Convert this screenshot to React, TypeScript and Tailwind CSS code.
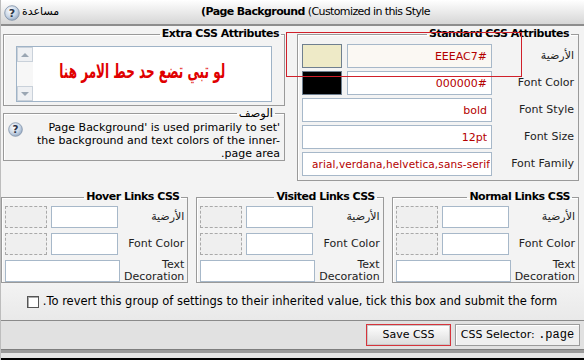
import { useState } from 'react';

const font = "font-['DejaVu_Sans',sans-serif]";

function HelpIcon({ size = 16 }: { size?: number }) {
  return (
    <svg width={size} height={size} viewBox="0 0 16 16">
      <defs>
        <radialGradient id="hg" cx="0.4" cy="0.35" r="0.7">
          <stop offset="0" stopColor="#ffffff" />
          <stop offset="0.6" stopColor="#c9d6e6" />
          <stop offset="1" stopColor="#8ea4bf" />
        </radialGradient>
      </defs>
      <circle cx="8" cy="8" r="7.3" fill="url(#hg)" stroke="#7d8fa6" strokeWidth="0.8" />
      <text x="8" y="12" textAnchor="middle" fontSize="11" fontWeight="bold" fill="#2b3445" fontFamily="DejaVu Sans, sans-serif">?</text>
    </svg>
  );
}

function Legend({ children }: { children: React.ReactNode }) {
  return (
    <legend className="mr-[3px] px-[2px] text-[11px] font-bold leading-[14px] tracking-[-0.5px] text-black">{children}</legend>
  );
}

function TextBox({ value = '', w, tint = false, small = false }: { value?: string; w: string; tint?: boolean; small?: boolean }) {
  return (
    <input
      readOnly
      dir="ltr"
      defaultValue={value}
      className={`${w} h-full border border-[#a7b8c9] ${tint ? 'bg-[#fbf8f3]' : 'bg-white'} ${small ? 'px-[1px] text-[10.5px] tracking-[0.1px]' : 'px-[4px] text-[11px]'} text-right text-[#b40000] outline-none ${font}`}
    />
  );
}

function StdRow({ label, value, swatch, small }: { label: string; value: string; swatch?: string; small?: boolean }) {
  return (
    <div className="flex h-[24px] items-center gap-[5px]">
      <div className="flex-1 text-right text-[11px] leading-[12px]">{label}</div>
      {swatch ? (
        <>
          <TextBox w="w-[145px]" value={value} tint={swatch === '#eeeac7'} />
          <div className="h-full w-[40px] border border-[#6f7f8f]" style={{ backgroundColor: swatch }} />
        </>
      ) : (
        <TextBox w="w-[190px]" value={value} small={small} />
      )}
    </div>
  );
}

function LinkPanel({ title }: { title: string }) {
  return (
    <fieldset className="border border-[#9a9a9a] px-[3px] pt-[2px] pb-0 shadow-[inset_1px_1px_0_#fff]">
      <Legend>{title}</Legend>
      <div className="flex flex-col gap-[5px]">
        <div className="flex h-[22px] items-center gap-[4px]">
          <div className="flex-1 text-right text-[11px]">الأرضية</div>
          <TextBox w="w-[67px]" />
          <div className="h-full w-[42px] border border-dashed border-[#a9a9a9] bg-[#efefef]" />
        </div>
        <div className="flex h-[22px] items-center gap-[4px]">
          <div className="flex-1 text-right text-[11px]">Font Color</div>
          <TextBox w="w-[67px]" />
          <div className="h-full w-[42px] border border-dashed border-[#a9a9a9] bg-[#efefef]" />
        </div>
        <div className="flex h-[22px] items-center gap-[4px]">
          <div className="flex-1 text-right text-[11px] leading-[12px]">
            Text
            <br />
            Decoration
          </div>
          <TextBox w="w-[115px]" />
        </div>
      </div>
    </fieldset>
  );
}

export default function App() {
  const [revert, setRevert] = useState(false);
  return (
    <div dir="rtl" className={`flex h-[360px] w-[584px] flex-col overflow-hidden border-l border-[#bdbdbd] bg-[#f3f3f3] text-[#222] ${font}`}>
      {/* title bar */}
      <div className="flex h-[26px] shrink-0 items-center justify-between border-b-2 border-[#8d8d8d] bg-gradient-to-b from-white to-[#d6d6d6]">
        <div className="pr-[154px] text-[11px] tracking-[-0.6px] text-black">
          <span dir="ltr">
            <b>(Page Background</b> (Customized in this Style
          </span>
        </div>
        <div className="flex items-center gap-[2px] pl-[3px] pt-[1px] text-[11px] text-black">
          <span>مساعدة</span>
          <HelpIcon />
        </div>
      </div>

      <div className="flex flex-1">
        <div className="flex flex-1 flex-col">
          {/* upper area */}
          <div className="relative mt-[1px] flex gap-[12px] pr-[5px] pl-[3px]">
            <fieldset className="w-[282px] border border-[#9a9a9a] px-[4px] pt-[3px] pb-[4px] shadow-[inset_1px_1px_0_#fff]">
              <Legend>Standard CSS Attributes</Legend>
              <div className="flex flex-col gap-[3px]">
                <StdRow label="الأرضية" value="EEEAC7#" swatch="#eeeac7" />
                <StdRow label="Font Color" value="000000#" swatch="#000000" />
                <StdRow label="Font Style" value="bold" />
                <StdRow label="Font Size" value="12pt" />
                <StdRow label="Font Family" value="arial,verdana,helvetica,sans-serif" small />
              </div>
            </fieldset>

            <div className="flex w-[282px] flex-col">
              <fieldset className="min-w-0 border border-[#9a9a9a] px-0 pt-[5px] pb-[3px] shadow-[inset_1px_1px_0_#fff]">
                <Legend>Extra CSS Attributes</Legend>
                <div className="mx-[12px] flex h-[56px] border border-[#9fb3c7] bg-white">
                  <div className="flex min-w-0 flex-1 items-center justify-center overflow-hidden pr-[20px] pb-[6px]">
                    <span className="inline-block shrink-0 scale-x-[0.6] whitespace-nowrap text-[20px] leading-none font-bold text-[#e00000]">
                      لو تبي تضع حد حط الامر هنا
                    </span>
                  </div>
                  <div className="flex w-[16px] shrink-0 flex-col justify-between bg-[#f7f7f7]">
                    <div className="flex h-[15px] items-center justify-center border border-[#c9d1da] bg-[#eef0f3]">
                      <div className="h-0 w-0 border-x-[4px] border-b-[4px] border-x-transparent border-b-[#9aa6b3]" />
                    </div>
                    <div className="flex h-[15px] items-center justify-center border border-[#c9d1da] bg-[#eef0f3]">
                      <div className="h-0 w-0 border-x-[4px] border-t-[4px] border-x-transparent border-t-[#9aa6b3]" />
                    </div>
                  </div>
                </div>
              </fieldset>
              <fieldset className="border border-[#9a9a9a] px-[4px] pt-[1px] pb-0 shadow-[inset_1px_1px_0_#fff]">
                <legend className="mr-[5px] px-[2px] text-[11.5px] leading-[14px] text-black">الوصف</legend>
                <div className="flex gap-[4px]">
                  <div className="flex-1 text-right text-[11px] leading-[13px] text-black">
                    'Page Background' is used primarily to set the background and text colors of the inner-page area.
                  </div>
                  <div className="pt-[1px]">
                    <HelpIcon size={15} />
                  </div>
                </div>
              </fieldset>
            </div>

            {/* highlight box drawn over the first row */}
            <div className="pointer-events-none absolute top-[5px] right-[62px] h-[45px] w-[236px] border border-[#d0202a]" />
          </div>

          {/* link panels */}
          <div className="mt-[9px] grid grid-cols-3 gap-[10px] pr-[5px] pl-[3px]">
            <LinkPanel title="Normal Links CSS" />
            <LinkPanel title="Visited Links CSS" />
            <LinkPanel title="Hover Links CSS" />
          </div>

          {/* revert */}
          <label className="flex flex-1 items-center justify-center gap-[4px] bg-gradient-to-b from-[#f3f3f3] to-[#e9e9e9] text-[11.5px] text-black">
            <span>To revert this group of settings to their inherited value, tick this box and submit the form.</span>
            <input
              type="checkbox"
              checked={revert}
              onChange={(e) => setRevert(e.target.checked)}
              className="h-[12px] w-[12px] appearance-none border border-[#555] bg-white shadow-[inset_1px_1px_0_#aaa]"
            />
          </label>
        </div>
        <div className="mt-[56px] w-[2px] bg-black" />
      </div>

      {/* footer */}
      <div className="flex h-[29px] shrink-0 items-center gap-[4px] border-t border-[#8a8a8a] bg-[#e1e1e1] pr-[4px]">
        <div className="flex h-[22px] w-[125px] items-center justify-center border border-[#9b9b9b] bg-[#efefef] text-[11px] text-black shadow-[inset_1px_1px_0_#fff]">
          <span dir="ltr">
            CSS Selector: <span className="font-['Liberation_Mono',monospace] text-[12px]">.page</span>
          </span>
        </div>
        <button className="h-[22px] w-[85px] border border-[#d6333b] bg-gradient-to-b from-white to-[#dcdcdc] text-[11px] text-black shadow-[inset_0_0_0_1px_#c8c8c8]">
          Save CSS
        </button>
      </div>
      <div className="h-[1px] shrink-0 bg-[#7e7e7e]" />
      <div className="h-[3px] shrink-0 bg-[#9a9a9a]" />
      <div className="h-[5px] shrink-0 bg-[#e5e5e5]" />
      <div className="h-[2px] shrink-0 bg-black" />
    </div>
  );
}
